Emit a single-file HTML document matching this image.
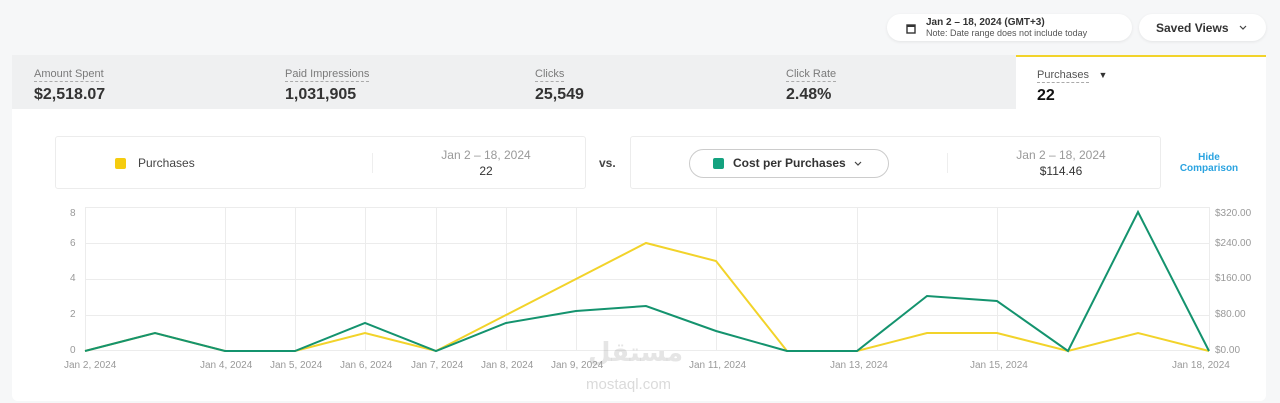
<!DOCTYPE html>
<html><head><style>
*{margin:0;padding:0;box-sizing:border-box}
body{width:1280px;height:403px;background:#f6f7f8;font-family:"Liberation Sans",sans-serif;position:relative;overflow:hidden;color:#222}
.pill{position:absolute;background:#fff;border-radius:14px;box-shadow:0 1px 3px rgba(0,0,0,.08)}
.tabs{position:absolute;left:12px;top:55px;width:1254px;height:54px;background:#eff0f1}
.tab{position:absolute;top:9px}
.tab .l{font-size:11px;color:#7a7a7a;border-bottom:1px dashed #aaa;display:inline-block;line-height:13px}
.tab .v{font-size:16px;font-weight:bold;color:#333;margin-top:4px}
.card{position:absolute;left:12px;top:109px;width:1254px;height:292px;background:#fff;border-radius:0 0 6px 6px}
.box{position:absolute;border:1px solid #ececec;border-radius:3px;background:#fff}
.ax{position:absolute;font-size:10px;color:#999}
</style></head><body>
<div class="pill" style="left:887px;top:14px;width:245px;height:27px">
 <svg style="position:absolute;left:19px;top:9px" width="10" height="11" viewBox="0 0 10 11"><rect x="1" y="2" width="8" height="8" fill="none" stroke="#333" stroke-width="1.4"/><rect x="1" y="2" width="8" height="2" fill="#333"/></svg>
 <div style="position:absolute;left:39px;top:3px;font-size:10px;font-weight:bold;color:#333">Jan 2 – 18, 2024 (GMT+3)</div>
 <div style="position:absolute;left:39px;top:14px;font-size:9px;color:#555">Note: Date range does not include today</div>
</div>
<div class="pill" style="left:1139px;top:14px;width:127px;height:27px">
 <div style="position:absolute;left:17px;top:7px;font-size:12px;font-weight:bold;color:#333">Saved Views</div>
 <svg style="position:absolute;left:100px;top:11px" width="8" height="6"><path d="M1 1L4 4L7 1" fill="none" stroke="#444" stroke-width="1.2"/></svg>
</div>
<div class="tabs">
 <div class="tab" style="left:22px"><div class="l">Amount Spent</div><div class="v">$2,518.07</div></div>
 <div class="tab" style="left:273px"><div class="l">Paid Impressions</div><div class="v">1,031,905</div></div>
 <div class="tab" style="left:523px"><div class="l">Clicks</div><div class="v">25,549</div></div>
 <div class="tab" style="left:774px"><div class="l">Click Rate</div><div class="v">2.48%</div></div>
 <div style="position:absolute;left:1004px;top:0;width:250px;height:54px;background:#fff;border-top:2px solid #f2d32a">
  <div class="tab" style="left:21px;top:8px"><div class="l" style="color:#555">Purchases</div> <span style="font-size:9px;color:#333;margin-left:5px">▼</span><div class="v" style="color:#111">22</div></div>
 </div>
</div>
<div class="card">
 <div class="box" style="left:43px;top:27px;width:531px;height:53px">
  <div style="position:absolute;left:59px;top:21px;width:11px;height:11px;background:#f5cc0f;border-radius:2px"></div>
  <div style="position:absolute;left:82px;top:19px;font-size:12px;color:#444">Purchases</div>
  <div style="position:absolute;left:316px;top:16px;width:1px;height:20px;background:#eee"></div>
  <div style="position:absolute;left:330px;top:11px;width:200px;text-align:center;font-size:12px;color:#999">Jan 2 – 18, 2024</div>
  <div style="position:absolute;left:330px;top:27px;width:200px;text-align:center;font-size:12px;color:#333">22</div>
 </div>
 <div style="position:absolute;left:587px;top:47px;font-size:12px;font-weight:bold;color:#444">vs.</div>
 <div class="box" style="left:618px;top:27px;width:531px;height:53px">
  <div style="position:absolute;left:58px;top:12px;width:200px;height:29px;border:1px solid #ccc;border-radius:15px">
   <div style="position:absolute;left:23px;top:8px;width:11px;height:11px;background:#14a27f;border-radius:2px"></div>
   <div style="position:absolute;left:43px;top:6px;font-size:12px;font-weight:bold;color:#333">Cost per Purchases</div>
   <svg style="position:absolute;left:164px;top:11px" width="8" height="6"><path d="M1 1L4 4L7 1" fill="none" stroke="#444" stroke-width="1.2"/></svg>
  </div>
  <div style="position:absolute;left:316px;top:16px;width:1px;height:20px;background:#eee"></div>
  <div style="position:absolute;left:330px;top:11px;width:200px;text-align:center;font-size:12px;color:#999">Jan 2 – 18, 2024</div>
  <div style="position:absolute;left:330px;top:27px;width:200px;text-align:center;font-size:12px;color:#333">$114.46</div>
 </div>
 <div style="position:absolute;left:1163px;top:43px;width:68px;text-align:center;font-size:10px;font-weight:bold;color:#2aa3e0;line-height:11px">Hide<br>Comparison</div>
</div>
<svg style="position:absolute;left:0;top:0" width="1280" height="403">
 <g stroke="#ececec" stroke-width="1" fill="none">
  <rect x="85.5" y="207.5" width="1124" height="143"/>
  <line x1="85" x2="1209" y1="243.5" y2="243.5"/><line x1="85" x2="1209" y1="279.5" y2="279.5"/><line x1="85" x2="1209" y1="315.5" y2="315.5"/>
  <line x1="225.5" x2="225.5" y1="207" y2="351"/><line x1="295.5" x2="295.5" y1="207" y2="351"/><line x1="365.5" x2="365.5" y1="207" y2="351"/><line x1="436.5" x2="436.5" y1="207" y2="351"/><line x1="506.5" x2="506.5" y1="207" y2="351"/><line x1="576.5" x2="576.5" y1="207" y2="351"/><line x1="716.5" x2="716.5" y1="207" y2="351"/><line x1="857.5" x2="857.5" y1="207" y2="351"/><line x1="997.5" x2="997.5" y1="207" y2="351"/>
 </g>
 <polyline fill="none" stroke="#f2d32a" stroke-width="2" points="85,351 155,333 225,351 295,351 365,333 436,351 506,315 576,279 646,243 716,261 787,351 857,351 927,333 997,333 1068,351 1138,333 1209,351"/>
 <polyline fill="none" stroke="#14936e" stroke-width="2" points="85,351 155,333 225,351 295,351 365,323 436,351 506,323 576,311 646,306 716,331 787,351 857,351 927,296 997,301 1068,351 1138,212 1209,351"/>
</svg>
<div class="ax" style="left:70px;top:208px">8</div><div class="ax" style="left:70px;top:238px">6</div><div class="ax" style="left:70px;top:273px">4</div><div class="ax" style="left:70px;top:309px">2</div><div class="ax" style="left:70px;top:345px">0</div>
<div class="ax" style="left:1215px;top:208px">$320.00</div><div class="ax" style="left:1215px;top:238px">$240.00</div><div class="ax" style="left:1215px;top:273px">$160.00</div><div class="ax" style="left:1215px;top:309px">$80.00</div><div class="ax" style="left:1215px;top:345px">$0.00</div>
<div class="ax" style="left:64px;top:360px">Jan 2, 2024</div><div class="ax" style="left:200px;top:360px">Jan 4, 2024</div><div class="ax" style="left:270px;top:360px">Jan 5, 2024</div><div class="ax" style="left:340px;top:360px">Jan 6, 2024</div><div class="ax" style="left:411px;top:360px">Jan 7, 2024</div><div class="ax" style="left:481px;top:360px">Jan 8, 2024</div><div class="ax" style="left:551px;top:360px">Jan 9, 2024</div><div class="ax" style="left:689px;top:360px">Jan 11, 2024</div><div class="ax" style="left:830px;top:360px">Jan 13, 2024</div><div class="ax" style="left:970px;top:360px">Jan 15, 2024</div><div class="ax" style="left:1172px;top:360px">Jan 18, 2024</div>
<div style="position:absolute;left:588px;top:338px;font-size:26px;font-weight:bold;color:rgba(150,150,150,.25);font-family:'DejaVu Sans',sans-serif">مستقل</div>
<div style="position:absolute;left:586px;top:376px;font-size:15px;color:rgba(150,150,150,.35)">mostaql.com</div>
</body></html>
